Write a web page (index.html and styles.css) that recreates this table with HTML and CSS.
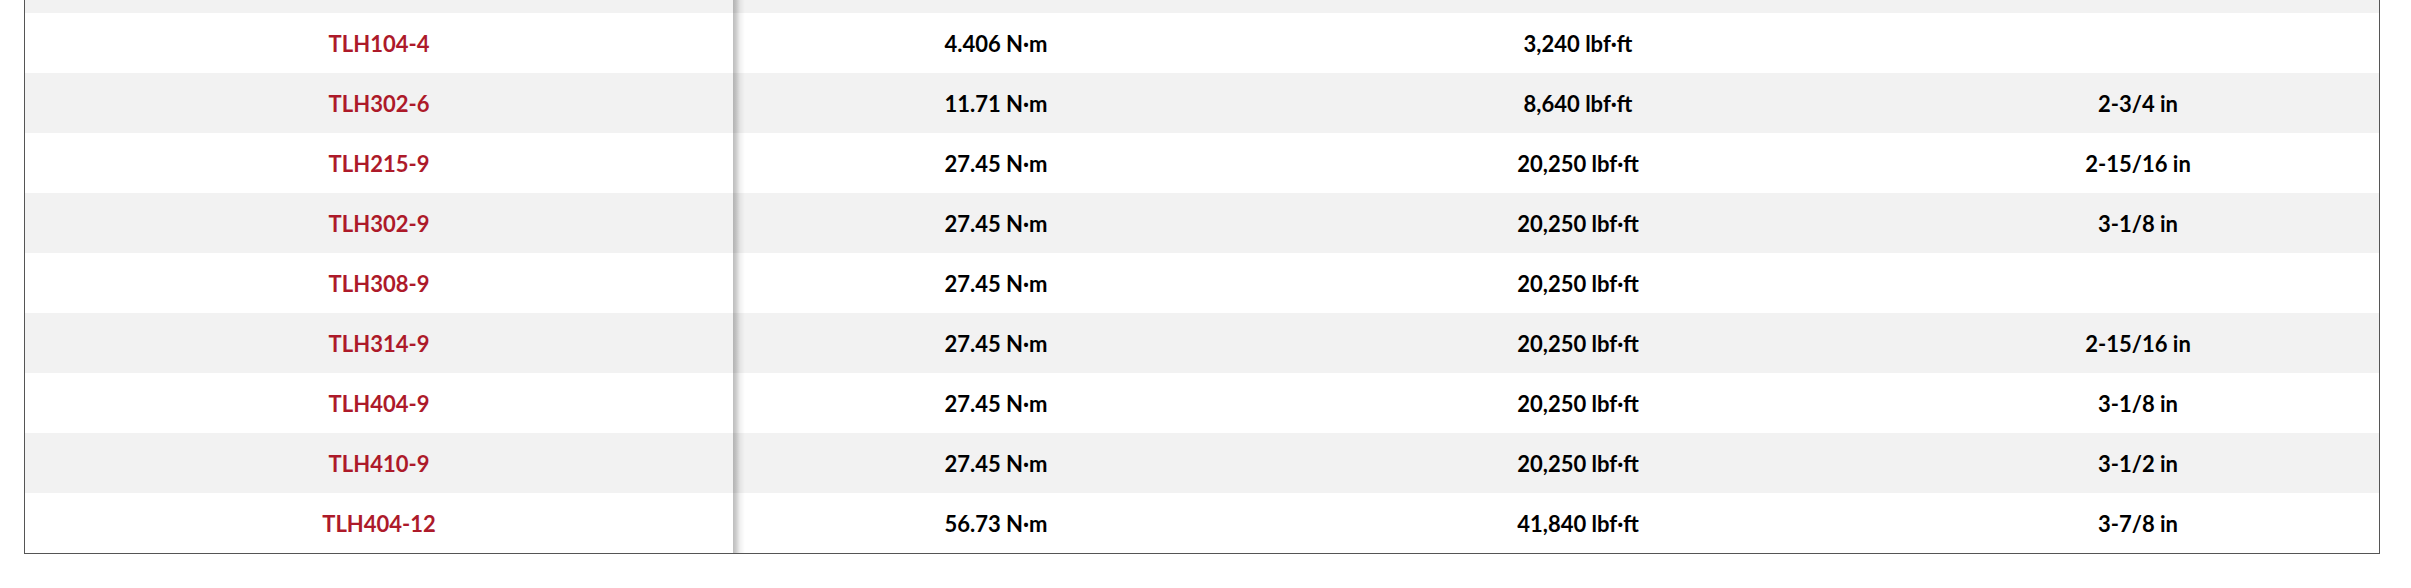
FILE: index.html
```html
<!DOCTYPE html>
<html lang="en">
<head>
<meta charset="utf-8">
<title>Torque table</title>
<link rel="stylesheet" href="styles.css">
</head>
<body>
<div class="page">
  <div class="table-wrap">
    <table class="spec-table">
      <colgroup>
        <col class="c-model">
        <col class="c-nm">
        <col class="c-lbf">
        <col class="c-in">
      </colgroup>
      <tbody>
        <tr class="alt"><td class="model">&nbsp;</td><td></td><td></td><td></td></tr>
        <tr><td class="model">TLH104-4</td><td>4.406 N·m</td><td>3,240 lbf·ft</td><td></td></tr>
        <tr class="alt"><td class="model">TLH302-6</td><td>11.71 N·m</td><td>8,640 lbf·ft</td><td>2-3/4 in</td></tr>
        <tr><td class="model">TLH215-9</td><td>27.45 N·m</td><td>20,250 lbf·ft</td><td>2-15/16 in</td></tr>
        <tr class="alt"><td class="model">TLH302-9</td><td>27.45 N·m</td><td>20,250 lbf·ft</td><td>3-1/8 in</td></tr>
        <tr><td class="model">TLH308-9</td><td>27.45 N·m</td><td>20,250 lbf·ft</td><td></td></tr>
        <tr class="alt"><td class="model">TLH314-9</td><td>27.45 N·m</td><td>20,250 lbf·ft</td><td>2-15/16 in</td></tr>
        <tr><td class="model">TLH404-9</td><td>27.45 N·m</td><td>20,250 lbf·ft</td><td>3-1/8 in</td></tr>
        <tr class="alt"><td class="model">TLH410-9</td><td>27.45 N·m</td><td>20,250 lbf·ft</td><td>3-1/2 in</td></tr>
        <tr><td class="model">TLH404-12</td><td>56.73 N·m</td><td>41,840 lbf·ft</td><td>3-7/8 in</td></tr>
      </tbody>
    </table>
  </div>
</div>
</body>
</html>
```
FILE: styles.css
```css
html, body {
  margin: 0;
  padding: 0;
  background: #ffffff;
}

.page {
  padding: 0 31px 0 24px;
  margin-top: -48px;
}

.table-wrap {
  border: 1px solid #555555;
  width: 2356px;
  box-sizing: border-box;
}

.spec-table {
  width: 100%;
  border-collapse: separate;
  border-spacing: 0;
  table-layout: fixed;
  font-family: Lato, "Open Sans", sans-serif;
  font-weight: 700;
  font-size: 22px;
  color: #000000;
}

.c-model { width: 708px; }
.c-nm { width: 526px; }
.c-lbf { width: 638px; }
.c-in { width: 482px; }

.spec-table tr {
  background: #ffffff;
}

.spec-table tr.alt {
  background: #f2f2f2;
}

.spec-table td {
  height: 60px;
  padding: 0;
  text-align: center;
  vertical-align: middle;
  white-space: nowrap;
}

.spec-table td.model {
  color: #ad1a2a;
}

.spec-table td.model + td {
  background-image: linear-gradient(to right,
    rgba(0, 0, 0, 0.26) 0px,
    rgba(0, 0, 0, 0.2) 3px,
    rgba(0, 0, 0, 0.06) 7px,
    rgba(0, 0, 0, 0) 12px);
  background-repeat: no-repeat;
}
```
